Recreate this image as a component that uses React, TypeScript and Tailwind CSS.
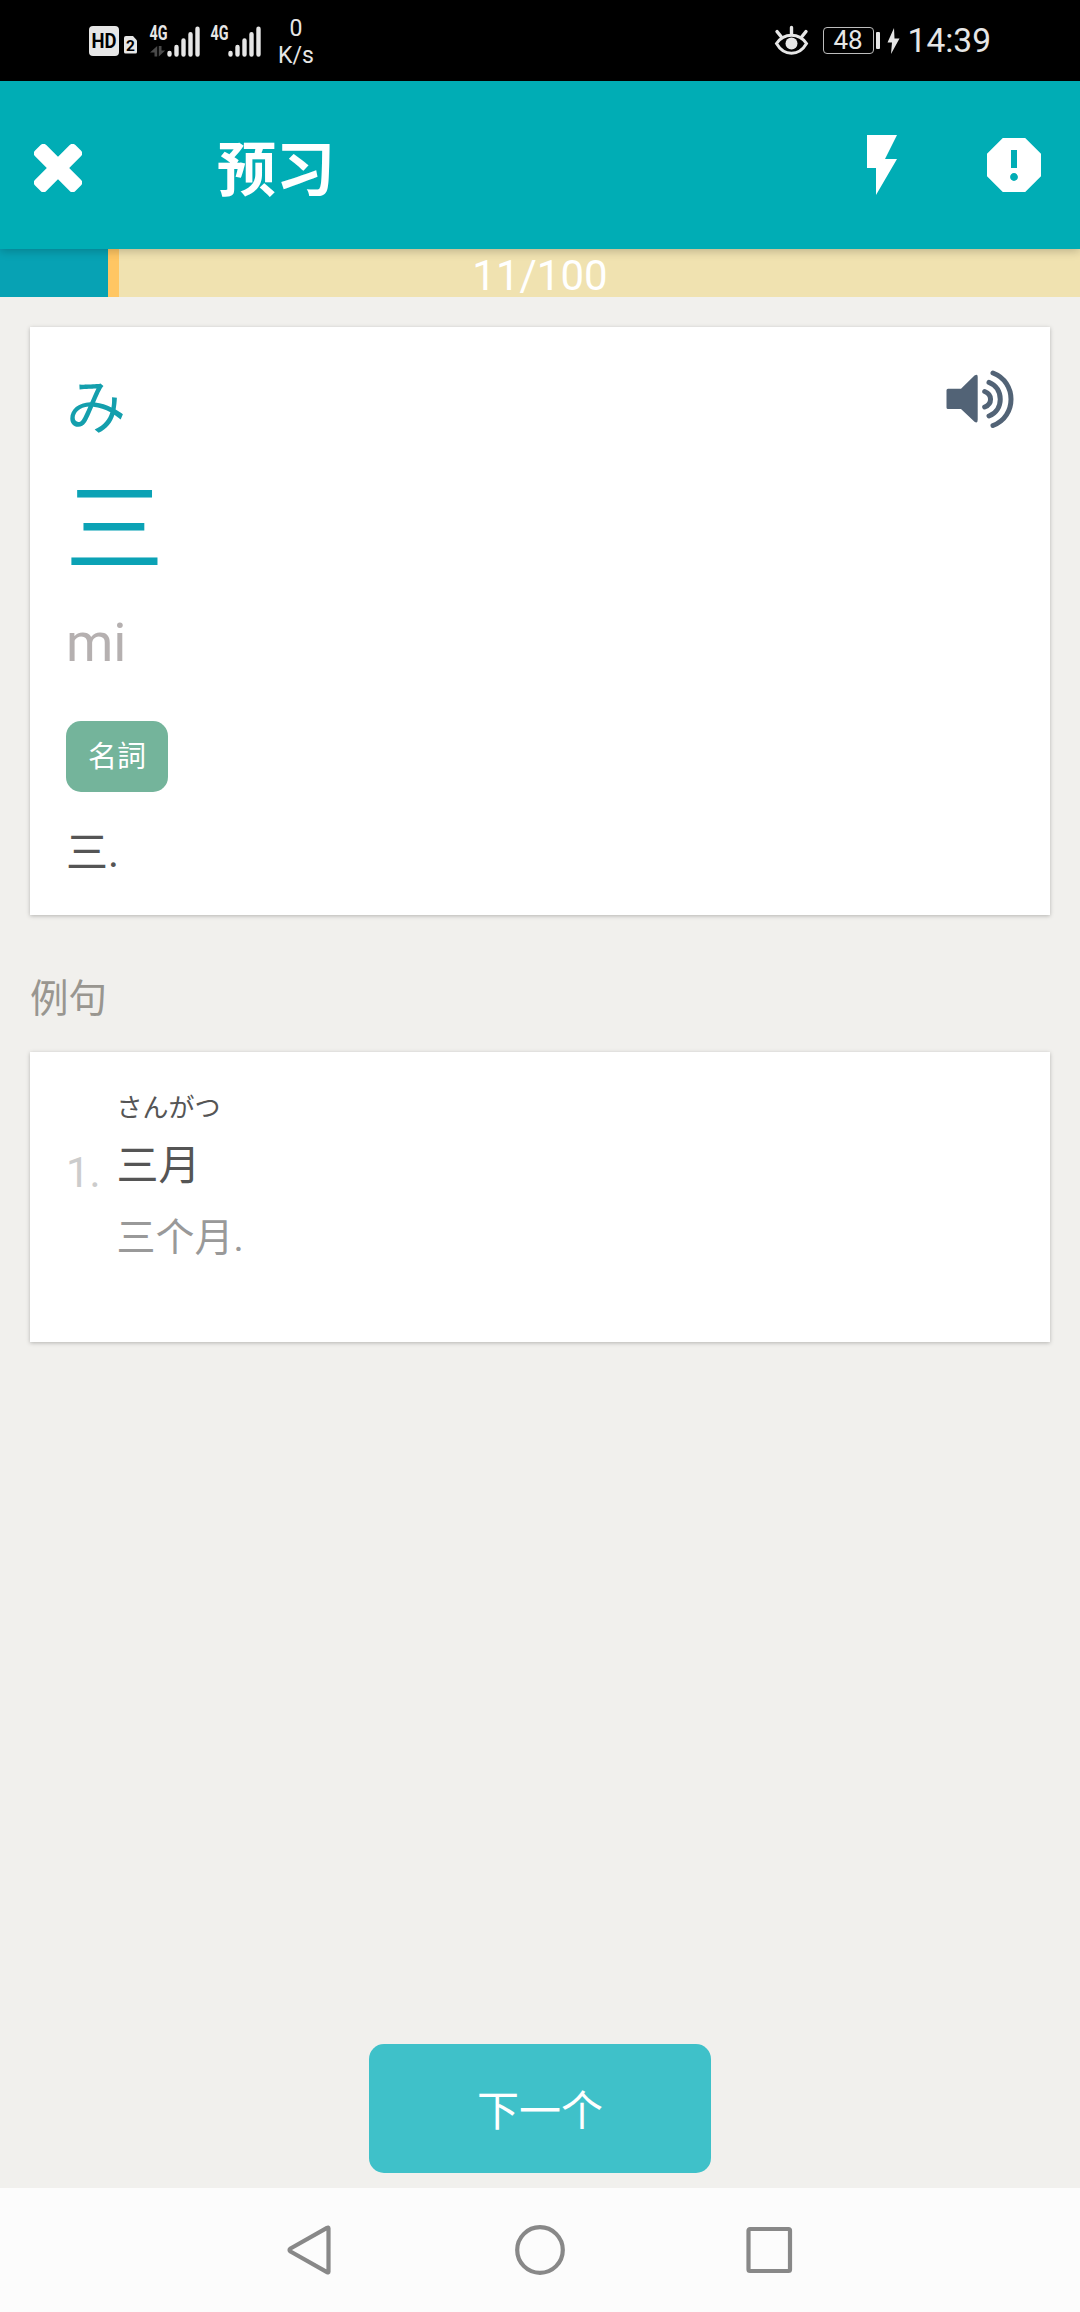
import type { ReactNode } from 'react';
import { MdFlashOn, MdReport } from 'react-icons/md';

const examples = [{ reading: 'さんがつ', text: '三月', translation: '三个月.' }];

const progress = { current: 11, total: 100 };

function SignalBars({ data }: { data?: boolean }) {
  return (
    <svg width="52" height="38" viewBox="0 -3 52 38" className="shrink-0 overflow-visible">
      <text
        x="0.5"
        y="15"
        fontSize="20"
        fontWeight="700"
        textLength="18"
        lengthAdjust="spacingAndGlyphs"
        fill="#e6e6e6"
        className="font-['Roboto']"
      >
        4G
      </text>
      {data && (
        <path d="M8.2 31.500V21L1 27.500H5.500V31.500zM9.800 21v10.500L16.200 25.500H12.500V21z" fill="#4a4a4a" />
      )}
      <g stroke="#e6e6e6" strokeWidth="4.4" strokeLinecap="round">
        <path d="M20.500 28V29.600M27.500 22V29.600M34.500 15.500V29.600M41.500 9.200V29.600M48.500 3.800V29.600" />
      </g>
    </svg>
  );
}

function StatusBar() {
  return (
    <div className="flex h-[81px] items-center bg-black pl-[89px] pr-[89px] text-[#e6e6e6]">
      {/* Network */}
      <svg width="49" height="30" viewBox="0 0 49 30" className="shrink-0">
        <rect width="30" height="30" rx="4" fill="#e6e6e6" />
        <text
          x="2.5"
          y="22"
          fontSize="20"
          fontWeight="700"
          textLength="25"
          lengthAdjust="spacingAndGlyphs"
          fill="#000"
          className="font-['Roboto']"
        >
          HD
        </text>
        <path d="M37 10h7l4 4.5V26a1.5 1.5 0 0 1-1.5 1.5h-10A1.5 1.5 0 0 1 35 26V12a2 2 0 0 1 2-2z" fill="#e6e6e6" />
        <text x="37" y="24.500" fontSize="15.500" fontWeight="700" fill="#000" className="font-['Roboto']">
          2
        </text>
      </svg>
      <div className="ml-[11px] flex gap-[9px]">
        <SignalBars data />
        <SignalBars />
      </div>
      <div className="ml-[14px] mt-[3px] w-[40px] text-center text-[23px] leading-[27px]">
        <div>0</div>
        <div>K/s</div>
      </div>

      <div className="ml-auto flex items-center">
        {/* Eye comfort */}
        <svg width="35" height="32" viewBox="0 0 35 32" fill="none" stroke="#e6e6e6" className="shrink-0">
          <path d="M2.5 18.5C10 7.5 25 7.5 32.5 18.5C25 31.5 10 31.5 2.5 18.5Z" strokeWidth="3" />
          <circle cx="17.5" cy="18.5" r="6" fill="#e6e6e6" stroke="none" />
          <path d="M17.5 2.5V9M3 6.5L7 11.5M32 6.5L28 11.5" strokeWidth="3.4" strokeLinecap="round" />
        </svg>
        {/* Battery */}
        <div className="ml-[14px] flex h-[27px] w-[51px] items-center justify-center rounded-[4px] border-[1.5px] border-[#bdbdbd] text-[26px] leading-[27px]">
          48
        </div>
        <div className="ml-[2px] h-[17px] w-1 rounded-[1px] bg-[#e6e6e6]" />
        <svg width="13" height="26" viewBox="0 0 13 26" className="ml-[7px] shrink-0">
          <path d="M7 0L0.5 14.5H5L4 26L12.5 10.500H7.500Z" fill="#e6e6e6" />
        </svg>
        <div className="ml-[8px] text-[33.500px] leading-[40px]">14:39</div>
      </div>
    </div>
  );
}

function AppBar() {
  return (
    <header className="relative z-10 flex h-[168px] items-center bg-[#00adb5] pl-[34px] pr-[30px] text-white shadow-[0_2px_9px_rgba(0,0,0,0.22)]">
      <button className="mt-[6px]">
        <svg width="48" height="48" viewBox="-24 -24 48 48" fill="currentColor">
          <rect x="-28.5" y="-7.9" width="57" height="15.8" rx="4" transform="rotate(45)" />
          <rect x="-28.5" y="-7.9" width="57" height="15.8" rx="4" transform="rotate(-45)" />
        </svg>
      </button>
      <h1 className="ml-[135px] mt-[11px] text-[59px] font-bold leading-[72px]">预习</h1>
      <div className="ml-auto flex gap-[60px]">
        <MdFlashOn size={72} />
        <MdReport size={72} />
      </div>
    </header>
  );
}

function ProgressBar() {
  const percent = (progress.current / progress.total) * 100;

  return (
    <div className="relative h-12 bg-[#f0e2b0]">
      <div
        className="h-full border-r-[11px] border-[#ffc663] bg-[#07a2b4]"
        style={{ width: `${percent}%` }}
      />
      <div className="absolute inset-0 text-center text-[42px] leading-[54px] text-white">
        {progress.current}/{progress.total}
      </div>
    </div>
  );
}

function SpeakerIcon() {
  return (
    <svg width="72" height="66" viewBox="0 0 72 66" fill="none">
      <path
        d="M6 25H19L32.500 11.800Q35.700 9.500 35.700 13V56Q35.700 60 32.500 58L19 45.300H6Q4.500 45.300 4.500 43.800V26.500Q4.500 25 6 25Z"
        transform="translate(0 -0.200)"
        fill="#526376"
      />
      <g stroke="#526376" strokeWidth="5" strokeLinecap="round">
        <path d="M42.700 27.500C50.500 30.500 50.500 40 42.700 43" />
        <path d="M47 18.300C62 24 62 46.500 47 52" />
        <path d="M51 9C75 18 75 52.500 51 61.500" />
      </g>
    </svg>
  );
}

function Card({ className, children }: { className: string; children: ReactNode }) {
  return (
    <section className={`mx-[30px] bg-white shadow-[0_1px_4px_rgba(0,0,0,0.25)] ${className}`}>
      {children}
    </section>
  );
}

function NavBar() {
  return (
    <nav className="flex h-[124px] items-center justify-center bg-[#fcfcfc]">
      <svg width="506" height="50" viewBox="0 0 506 50" fill="none" stroke="#888" strokeWidth="4.2" strokeLinejoin="round">
        <path d="M41.500 3.200Q41.500 2 40 2.800L3.500 23.500Q1.500 25 3.500 26.500L40 47.200Q41.500 48 41.500 46.800Z" />
        <circle cx="253" cy="25" r="22.800" />
        <rect x="461.500" y="4" width="41.500" height="42" rx="1.500" />
      </svg>
    </nav>
  );
}

export default function App() {
  return (
    <div className="flex h-[2312px] w-[1080px] flex-col overflow-hidden bg-[#f1f0ed] font-['Roboto','Noto_Sans_CJK_SC',sans-serif]">
      <StatusBar />
      <AppBar />
      <ProgressBar />

      <main className="flex grow flex-col">
        {/* Word */}
        <Card className="mt-[30px] flex h-[588px] justify-between pl-[36px] pr-[36px] pt-[46px]">
          <div className="flex flex-col items-start">
            <p className="text-[60px] leading-[72px] text-[#149fad]">み</p>
            <h2 className="-ml-px mt-[35px] text-[99px] leading-[100px] text-[#0ba2b5]">三</h2>
            <p className="mt-[31px] text-[54px] leading-[64px] text-[#b5b0b0]">mi</p>
            <span className="mt-[46px] flex h-[71px] w-[102px] items-center justify-center rounded-[15px] bg-[#74b49b] pt-[3px] text-[29px] text-white">
              名詞
            </span>
            <p className="mt-[36px] text-[42px] leading-[50px] text-[#555]">三.</p>
          </div>
          <button className="-mt-[9px] self-start">
            <SpeakerIcon />
          </button>
        </Card>

        {/* Examples */}
        <h3 className="mb-7 ml-[30px] mt-[59px] text-[38.500px] leading-[50px] text-[#999690]">例句</h3>
        <Card className="h-[290px] pl-[36px] pt-[36px]">
          {examples.map((example, i) => (
            <div key={example.text} className="flex">
              <span className="w-[50.500px] pt-[60px] text-[42px] leading-[50px] text-[#ccc]">{i + 1}.</span>
              <div>
                <p className="text-[26px] leading-[40px] text-[#555]">{example.reading}</p>
                <p className="mt-[13px] text-[42px] leading-[50px] text-[#555]">{example.text}</p>
                <p className="mt-[22px] text-[39px] leading-[50px] text-[#999]">{example.translation}</p>
              </div>
            </div>
          ))}
        </Card>

        <button className="mx-auto mb-[15px] mt-auto h-[129px] w-[342px] rounded-[15px] bg-[#3fc1c9] pt-[5px] text-[42px] text-white">
          下一个
        </button>
      </main>

      <NavBar />
    </div>
  );
}
